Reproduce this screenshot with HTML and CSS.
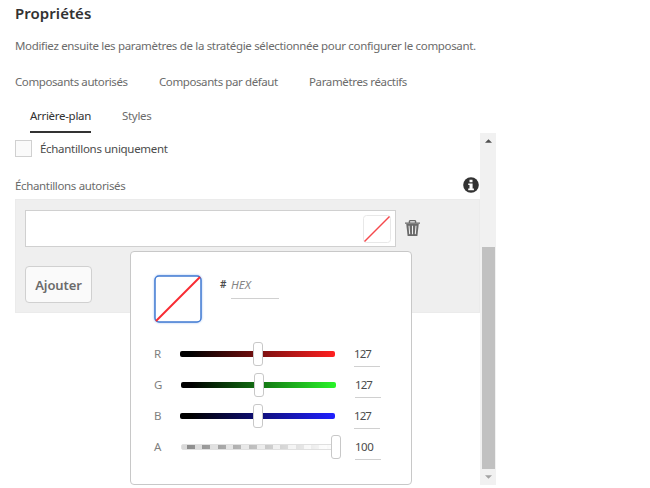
FILE: index.html
```html
<!DOCTYPE html>
<html lang="fr">
<head>
<meta charset="utf-8">
<title>Propriétés</title>
<link rel="stylesheet" href="styles.css">
</head>
<body>
<main class="properties">
  <h1 class="title"><span>Propriétés</span></h1>
  <p class="intro"><span>Modifiez ensuite les paramètres de la stratégie sélectionnée pour configurer le composant.</span></p>
  <nav class="tabs">
    <span class="tab tab-allowed">Composants autorisés</span>
    <span class="tab tab-default">Composants par défaut</span>
    <span class="tab tab-responsive">Paramètres réactifs</span>
  </nav>
  <nav class="subtabs">
    <span class="subtab active">Arrière-plan</span>
    <span class="subtab">Styles</span>
  </nav>
  <div class="viewport">
    <section class="content">
      <label class="check"><span class="box"></span><span class="check-text">Échantillons uniquement</span></label>
      <div class="heading">
        <span class="heading-text">Échantillons autorisés</span>
        <svg class="info" viewBox="0 0 16 16"><circle cx="8" cy="8" r="7.8"/><path d="M6.500 2.800h3v2.400h-3zM5.200 6.400h4.400v5.200h1.300v1.600H5.200v-1.600h1.300V8H5.200z"/></svg>
      </div>
      <div class="well">
        <div class="row">
          <div class="field"><svg class="swatch" viewBox="0 0 28 28"><rect x=".5" y=".5" width="27" height="27" rx="3"/><path d="M1.500 26.500 26.500 1.500"/></svg></div>
          <svg class="trash" viewBox="0 0 16 18"><path class="solid" d="M5 0h6l1 1v1.500h4V4H0V2.500h4V1zM5.500 1.200v1.300h5V1.200z" fill-rule="evenodd"/><path class="solid" d="M1.300 4h13.400l-1.500 13H2.800z"/><path class="slots" d="m4.300 6 .7 9M8 6v9M11.700 6l-.7 9"/></svg>
        </div>
        <button class="add">Ajouter</button>
        <div class="popover">
          <div class="preview-row">
            <svg class="preview" viewBox="0 0 48 48"><rect x="1" y="1" width="46" height="46" rx="4"/><path d="M2 46 46 2"/></svg>
            <span class="hash">#</span><span class="hex">HEX</span>
          </div>
          <div class="channel red"><span class="name">R</span><span class="track"><i class="thumb"></i></span><span class="value">127</span></div>
          <div class="channel green"><span class="name">G</span><span class="track"><i class="thumb"></i></span><span class="value">127</span></div>
          <div class="channel blue"><span class="name">B</span><span class="track"><i class="thumb"></i></span><span class="value">127</span></div>
          <div class="channel alpha"><span class="name">A</span><span class="track"><i class="thumb"></i></span><span class="value">100</span></div>
        </div>
      </div>
    </section>
    <div class="scrollbar">
      <svg class="arrow" viewBox="0 0 8 4"><path d="M0 4 4 0l4 4z" fill="#505050"/></svg>
      <div class="scroll-thumb"></div>
      <svg class="arrow" viewBox="0 0 8 4"><path d="m0 0 4 4 4-4z" fill="#a3a3a3"/></svg>
    </div>
  </div>
</main>
</body>
</html>
```
FILE: styles.css
```css
* { box-sizing: border-box; }
body { margin: 0; background: #fff; color: #6b6b6b; font: 11.5px/16px "Noto Sans", sans-serif; overflow: hidden; }
.properties { width: 482px; margin-left: 15px; padding-top: 3px; }
.title { margin: 0; font-size: 15px; line-height: 20px; font-weight: 600; color: #323232; letter-spacing: .05px; }
.intro { margin: 15px 0 0; white-space: nowrap; letter-spacing: -.33px; }
.tabs { display: flex; margin-top: 20px; white-space: nowrap; letter-spacing: -.4px; }
.tab-allowed { width: 144px; }
.tab-default { width: 150px; }
.tab-responsive { letter-spacing: -.36px; }
.subtabs { display: flex; gap: 31px; height: 43px; padding: 18px 0 0 15px; letter-spacing: -.3px; }
.subtab { width: 61px; height: 25px; white-space: nowrap; }
.subtab.active { color: #323232; border-bottom: 2px solid #323232; }
.viewport { display: flex; height: 352px; }
.content { width: 465px; }
.check { display: flex; align-items: center; height: 18px; margin-top: 6px; }
.box { width: 17px; height: 17px; margin-right: 8px; border: 1px solid #d0d0d0; background: #fafafa; }
.check-text { color: #4b4b4b; padding-top: 2px; letter-spacing: -.3px; }
.heading { display: flex; justify-content: space-between; align-items: center; margin-top: 20px; height: 16px; letter-spacing: -.35px; }
.heading-text { padding-top: 2px; }
.info { width: 16px; height: 16px; margin-right: 1px; fill: #323232; }
.info path { fill: #fff; }
.well { position: relative; height: 114px; margin-top: 6px; padding: 10px 9px; background: #efefef; border: 1px solid #ebebeb; }
.row { display: flex; align-items: center; }
.field { display: flex; align-items: center; justify-content: flex-end; width: 371px; height: 37px; padding-right: 4px; border: 1px solid #d0d0d0; background: #fff; }
.swatch { width: 28px; height: 28px; fill: #fff; stroke: #e8e8e8; }
.swatch path { stroke: #f5494d; stroke-width: 1.5; }
.trash { width: 15px; height: 17px; margin-left: 9px; }
.solid { fill: #6b6b6b; }
.slots { fill: none; stroke: #efefef; stroke-width: 1.1; }
.add { display: block; width: 67px; height: 37px; margin-top: 19px; padding: 0; border: 1px solid #d0d0d0; border-radius: 4px; background: #fafafa; color: #6b6b6b; font: 600 13px/18px "Noto Sans", sans-serif; letter-spacing: -.1px; }
.popover { position: absolute; left: 114px; top: 51px; width: 282px; height: 234px; padding: 23px; border: 1px solid #c8c8c8; border-radius: 4px; background: #fff; }
.preview-row { display: flex; align-items: flex-start; height: 63px; }
.preview { width: 48px; height: 48px; fill: #fff; stroke: #427bd2; stroke-width: 1.5; filter: drop-shadow(0 0 1px #9fc0f4); }
.preview path { stroke: #f82b32; stroke-width: 2; }
.hash { width: 11px; margin: 1px 0 0 18px; font-size: 10px; font-weight: 600; color: #4b4b4b; }
.hex { width: 48px; height: 22px; margin-top: 2px; border-bottom: 1px solid #d0d0d0; color: #858585; font-style: italic; }
.channel { display: flex; align-items: center; height: 31px; }
.name { width: 26px; color: #808080; }
.track { position: relative; width: 155px; height: 6px; border-radius: 2px; }
.thumb { position: absolute; left: 72.5px; top: -9px; width: 10px; height: 24px; border: 1px solid #c8c8c8; border-radius: 3px; background: #fff; }
.value { width: 26px; height: 26px; margin-left: 19px; padding-top: 5px; border-bottom: 1px solid #d0d0d0; color: #4b4b4b; letter-spacing: -.9px; position: relative; }
.red .track { background: linear-gradient(90deg, #000 7%, #ff2020); }
.green .track { background: linear-gradient(90deg, #000 7%, #28f428); }
.blue .track { background: linear-gradient(90deg, #000 7%, #2020ff); }
.green .track, .alpha .track { left: 1px; }
.green .value, .alpha .value { left: 1px; }
.alpha .value { letter-spacing: -.5px; }
.alpha .track { background: linear-gradient(90deg, transparent, #fff), repeating-linear-gradient(90deg, #d9d9d9 0 5px, #888 5px 13px, #d9d9d9 13px 15.500px); border: 1px solid #e0e0e0; }
.alpha .thumb { left: 149px; top: -10px; }
.scrollbar { display: flex; flex-direction: column; align-items: center; width: 16px; padding: 6px 0; background: #f1f1f1; }
.arrow { width: 7px; height: 4px; }
.scroll-thumb { width: 13px; height: 222px; margin: 104px 0 6px; background: #c1c1c1; }
```
